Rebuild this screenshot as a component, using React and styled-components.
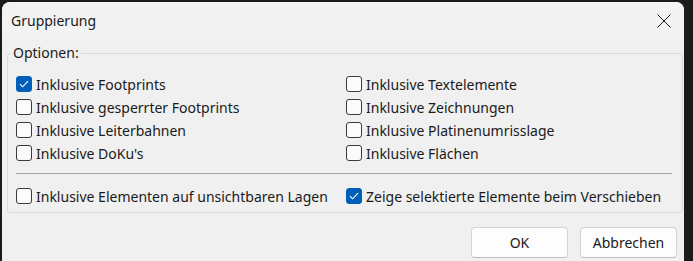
import React from "react";
import styled, { createGlobalStyle } from "styled-components";

const GlobalStyle = createGlobalStyle`
  html, body {
    margin: 0;
    padding: 0;
    background: #1b1b1b;
    font-family: "Segoe UI", "Noto Sans", "Open Sans", sans-serif;
    color: #1a1a1a;
  }
`;

const Window = styled.div`
  margin: 2px 0 0 2px;
  width: 682px;
  height: 259px;
  background: #f0f0f0;
  border-radius: 8px 8px 0 0;
  display: flex;
  flex-direction: column;
  overflow: hidden;
`;

const TitleBar = styled.div`
  height: 37px;
  display: flex;
  align-items: center;
  justify-content: space-between;
  padding: 0 13px 0 9px;
  background: #f3f3f3;
`;

const Title = styled.span`
  font-size: 14px;
`;

const GroupBox = styled.fieldset`
  margin: 4px 0 0 5px;
  width: 676px;
  box-sizing: border-box;
  padding: 0 8px 8px 8px;
  border: 1px solid #dadada;
  border-radius: 3px;
  min-width: 0;
`;

const Legend = styled.legend`
  font-size: 14px;
  line-height: 20px;
  padding: 0 2px;
  margin-left: -5px;
`;

const OptionGrid = styled.div`
  margin-top: 13px;
  display: grid;
  grid-template-columns: 330px 1fr;
  grid-auto-rows: 16px;
  row-gap: 7px;
`;

const Separator = styled.div`
  margin: 12px 2px 0 0;
  height: 1px;
  background: #a3a3a3;
`;

const BottomGrid = styled(OptionGrid)`
  margin-top: 14px;
`;

const Option = styled.label`
  display: flex;
  align-items: center;
  gap: 4px;
  font-size: 14px;
  white-space: nowrap;
`;

const Box = styled.span`
  width: 16px;
  height: 16px;
  box-sizing: border-box;
  border-radius: 3px;
  border: 1px solid ${(p) => (p.$checked ? "#005fb8" : "#3a3a3a")};
  background: ${(p) => (p.$checked ? "#005fb8" : "#fbfbfb")};
  display: flex;
  align-items: center;
  justify-content: center;
  flex: none;
`;

const Footer = styled.div`
  display: flex;
  justify-content: flex-end;
  gap: 12px;
  padding: 14px 7px 0 0;
`;

const Button = styled.button`
  width: 97px;
  height: 31px;
  box-sizing: border-box;
  background: #fdfdfd;
  border: 1px solid #d4d4d4;
  border-bottom-color: #bcbcbc;
  border-radius: 4px;
  font-family: inherit;
  font-size: 14px;
  color: #1a1a1a;
  padding: 0;
`;

const Checkbox = ({ checked, children }) => (
  <Option>
    <Box $checked={checked}>
      {checked && (
        <svg width="10" height="8" viewBox="0 0 10 8">
          <path d="M1 4.2 L3.6 6.8 L9 1.2" fill="none" stroke="#fff" strokeWidth="1.1" />
        </svg>
      )}
    </Box>
    {children}
  </Option>
);

const options = [
  ["Inklusive Footprints", true],
  ["Inklusive Textelemente", false],
  ["Inklusive gesperrter Footprints", false],
  ["Inklusive Zeichnungen", false],
  ["Inklusive Leiterbahnen", false],
  ["Inklusive Platinenumrisslage", false],
  ["Inklusive DoKu's", false],
  ["Inklusive Flächen", false],
];

export default function App() {
  return (
    <>
      <GlobalStyle />
      <Window>
        <TitleBar>
          <Title>Gruppierung</Title>
          <svg width="14" height="14" viewBox="0 0 14 14">
            <path d="M0.5 0.5 L13.5 13.5 M13.5 0.5 L0.5 13.5" stroke="#1a1a1a" strokeWidth="1" />
          </svg>
        </TitleBar>
        <GroupBox>
          <Legend>Optionen:</Legend>
          <OptionGrid>
            {options.map(([label, checked]) => (
              <Checkbox key={label} checked={checked}>
                {label}
              </Checkbox>
            ))}
          </OptionGrid>
          <Separator />
          <BottomGrid>
            <Checkbox>Inklusive Elementen auf unsichtbaren Lagen</Checkbox>
            <Checkbox checked>Zeige selektierte Elemente beim Verschieben</Checkbox>
          </BottomGrid>
        </GroupBox>
        <Footer>
          <Button>OK</Button>
          <Button>Abbrechen</Button>
        </Footer>
      </Window>
    </>
  );
}
